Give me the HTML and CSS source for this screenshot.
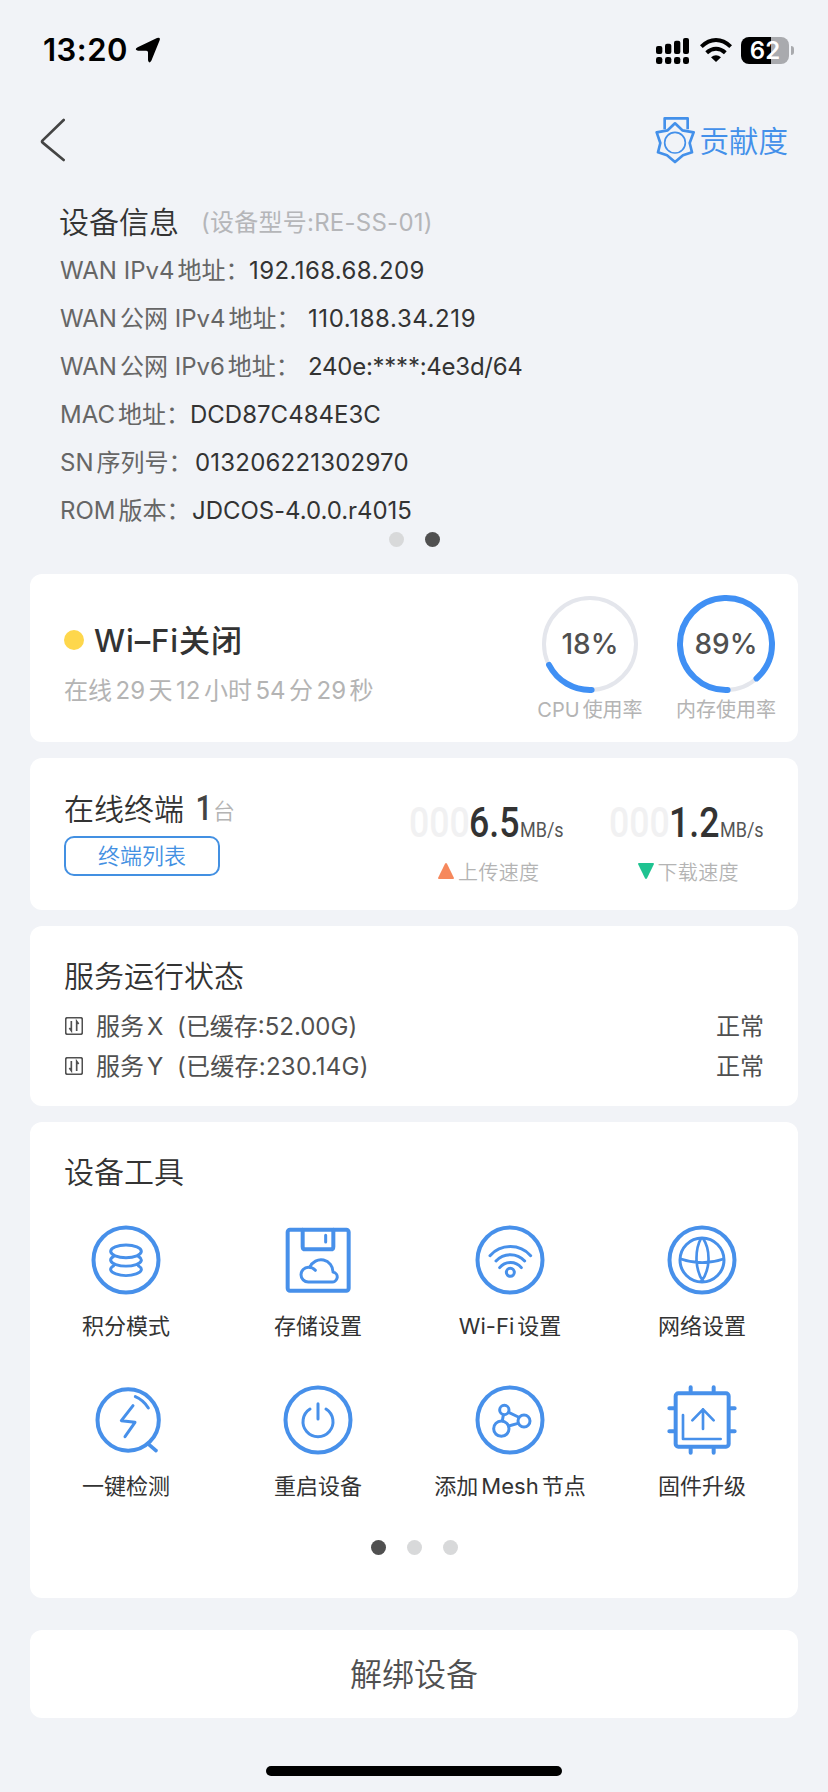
FILE: index.html
```html
<!DOCTYPE html>
<html lang="zh-CN">
<head>
<meta charset="utf-8">
<title>设备信息</title>
<link rel="stylesheet" href="styles.css">
</head>
<body>
<div class="page">
  <header class="status">
    <span class="clock">13:20</span>
    <svg class="locate" width="26" height="26" viewBox="0 0 78 78"><path d="M8 31 66 3Q77 -1 74 10L49 71Q42 82 39 70V46Q39 41 34 41H9Q-4 38 8 31Z"/></svg>
    <svg class="signal" width="33" height="27" viewBox="0 0 99 81">
      <rect x="0" y="27" width="19" height="24" rx="6"/><rect x="27" y="20" width="19" height="31" rx="6"/><rect x="54" y="11" width="19" height="40" rx="6"/><rect x="81" y="3" width="18" height="48" rx="6"/>
      <rect x="0" y="60" width="19" height="21" rx="7"/><rect x="27" y="60" width="19" height="21" rx="7"/><rect x="54" y="60" width="19" height="21" rx="7"/><rect x="81" y="60" width="18" height="21" rx="7"/>
    </svg>
    <svg class="wifi" width="32" height="27" viewBox="0 0 96 81">
      <g fill="none" stroke="#000" stroke-width="12"><path d="M4 29Q24 9 48 9T92 29"/><path d="M20 47Q33 35 48 35T76 47"/></g>
      <path d="M33 61Q48 49 63 61L48 75Z"/>
    </svg>
    <div class="battery"><span>62</span></div>
    <i class="nub"></i>
  </header>

  <nav class="nav">
    <svg class="back" width="26" height="44" viewBox="0 0 78 132"><path d="M74 6 11 67Q7 71 11 74L74 126"/></svg>
    <svg class="medal" width="40" height="48" viewBox="0 0 120 144">
      <path d="M29 40V7H98V40"/>
      <path d="M60 22 82 43 116 49 104 81 111 109 84 118 60 138 36 118 9 109 16 81 5 49 38 43Z"/>
      <circle cx="60" cy="80" r="31" stroke-width="5"/>
    </svg>
    <span class="contrib">贡献度</span>
  </nav>

  <section class="info">
    <div class="info-title"><h1>设备信息</h1><span class="model">(设备型号:RE-SS-01)</span></div>
    <div class="row"><span class="key k1">WAN IPv4<b></b>地址：</span><span class="val v1">192.168.68.209</span></div>
    <div class="row"><span class="key k2">WAN<b></b>公网 IPv4<b></b>地址：</span><span class="val v2">110.188.34.219</span></div>
    <div class="row"><span class="key k2">WAN<b></b>公网 IPv6<b></b>地址：</span><span class="val v3">240e:****:4e3d/64</span></div>
    <div class="row"><span class="key k4">MAC<b></b>地址：</span><span class="val v4">DCD87C484E3C</span></div>
    <div class="row"><span class="key k5">SN<b></b>序列号：</span><span class="val v5">013206221302970</span></div>
    <div class="row"><span class="key k6">ROM<b></b>版本：</span><span class="val v6">JDCOS-4.0.0.r4015</span></div>
    <div class="dots info-dots"><i></i><i class="on"></i></div>
  </section>

  <section class="card wifi-card">
    <div class="wifi-main">
      <div class="wifi-name"><i></i><span>Wi–Fi关闭</span></div>
      <div class="uptime">在线<b></b>29<b></b>天<b></b>12<b></b>小时<b></b>54<b></b>分<b></b>29<b></b>秒</div>
    </div>
    <div class="gauge">
      <div class="ring">
        <svg width="100" height="100" viewBox="0 0 100 100"><circle class="track" cx="50" cy="50" r="46"/><circle class="arc" cx="50" cy="50" r="46" pathLength="100" stroke-dasharray="18 100" transform="rotate(88 50 50)"/></svg>
        <span>18%</span>
      </div>
      <div class="gauge-label">CPU<b></b>使用率</div>
    </div>
    <div class="gauge">
      <div class="ring">
        <svg width="100" height="100" viewBox="0 0 100 100"><circle class="track" cx="50" cy="50" r="46"/><circle class="arc" cx="50" cy="50" r="46" pathLength="100" stroke-dasharray="89 100" transform="rotate(88 50 50)"/></svg>
        <span>89%</span>
      </div>
      <div class="gauge-label">内存使用率</div>
    </div>
  </section>

  <section class="card net-card">
    <div class="clients">
      <div class="clients-line"><h2>在线终端</h2><span class="count">1</span><span class="unit">台</span></div>
      <button class="list-btn">终端列表</button>
    </div>
    <div class="speed">
      <div class="speed-line"><span class="zeros">000</span><span class="num">6.5</span><span class="mbs">MB/s</span></div>
      <div class="speed-label"><svg width="16" height="16" viewBox="0 0 16 16"><path d="M7 .8Q8 -.6 9 .8L16 15Q16 16 15 16H1Q0 16 0 15Z" fill="#f6885c"/></svg>上传速度</div>
    </div>
    <div class="speed">
      <div class="speed-line"><span class="zeros">000</span><span class="num">1.2</span><span class="mbs">MB/s</span></div>
      <div class="speed-label"><svg width="16" height="16" viewBox="0 0 16 16"><path d="M7 15.2Q8 16.6 9 15.2L16 1Q16 0 15 0H1Q0 0 0 1Z" fill="#1fc391"/></svg>下载速度</div>
    </div>
  </section>

  <section class="card service-card">
    <h2>服务运行状态</h2>
    <div class="service"><svg width="18" height="18" viewBox="0 0 54 54"><rect x="2" y="2" width="50" height="50" rx="6"/><path d="M19 12V41L13 33M35 42V13L41 21"/></svg><span class="sname">服务<b></b>X</span><span class="cache c1">(已缓存:52.00G)</span><span class="ok">正常</span></div>
    <div class="service"><svg width="18" height="18" viewBox="0 0 54 54"><rect x="2" y="2" width="50" height="50" rx="6"/><path d="M19 12V41L13 33M35 42V13L41 21"/></svg><span class="sname">服务<b></b>Y</span><span class="cache c2">(已缓存:230.14G)</span><span class="ok">正常</span></div>
  </section>

  <section class="card tools-card">
    <h2>设备工具</h2>
    <div class="tools">
      <div class="tool"><svg viewBox="-108 -108 216 216"><circle class="o" r="97.500"/><ellipse cy="-26" rx="46" ry="19"/><path d="M-38 -10A46 18 0 1 0 38 -10M-38 18A46 18 0 1 0 38 18"/></svg><span>积分模式</span></div>
      <div class="tool"><svg viewBox="-108 -108 216 216"><rect class="o" x="-91" y="-91" width="183" height="183" rx="7"/><path class="o" d="M-46 -91V-40Q-46 -32 -38 -32H38Q46 -32 46 -40V-91"/><path d="M23 -74V-54M-8 31C-14 24 -22 22 -29 22A22 22 0 0 0 -29 66H40A15 15 0 0 0 45 36A36 36 0 0 0 -24 21"/></svg><span>存储设置</span></div>
      <div class="tool"><svg viewBox="-108 -108 216 216"><circle class="o" r="97.500"/><path d="M-60 -13A82 82 0 0 1 62 -13M-42 3A58 58 0 0 1 44 3M-31 23A42 42 0 0 1 34 23"/><circle cx="1" cy="37" r="12"/></svg><span>Wi-Fi<b></b>设置</span></div>
      <div class="tool"><svg viewBox="-108 -108 216 216"><circle class="o" r="97.500"/><circle r="66"/><path class="t" d="M-63 -3Q0 19 64 -3M-3 -65C-22 -30 -22 30 4 65M3 -65C26 -30 26 30 -3 65"/></svg><span>网络设置</span></div>
      <div class="tool"><svg viewBox="-108 -108 216 216"><circle class="o" cx="6.500" r="92"/><path d="M28 -70Q52 -60 67 -36M21 -43L-14 2L27 7L-3 50"/><path class="m" d="M69 74L90 92"/></svg><span>一键检测</span></div>
      <div class="tool"><svg viewBox="-108 -108 216 216"><circle class="o" r="97.500"/><path d="M0 -49V-3M-24 -33A45 45 0 1 0 24 -33"/></svg><span>重启设备</span></div>
      <div class="tool"><svg viewBox="-108 -108 216 216"><circle class="o" r="97.500"/><circle cx="-17" cy="-30" r="14"/><circle cx="42" cy="3" r="18"/><circle cx="-26" cy="26" r="23"/><path d="M-4 -23L25 -9M-4 18L24 10M-20 -15L-23 2"/></svg><span>添加<b></b>Mesh<b></b>节点</span></div>
      <div class="tool"><svg viewBox="-108 -108 216 216"><rect class="o" x="-79" y="-80" width="159" height="160" rx="8"/><path class="o" d="M-34 -98V-86M35 -98V-86M-34 86V98M35 86V98M-98 -35H-85M-98 34H-85M86 -35H98M86 34H98"/><path class="t" d="M3 27V-32M-29 1L3 -32L35 1M-57 -15V57H56"/></svg><span>固件升级</span></div>
    </div>
    <div class="dots tool-dots"><i class="on"></i><i></i><i></i></div>
  </section>

  <button class="card unbind">解绑设备</button>
  <div class="home"></div>
</div>
</body>
</html>
```
FILE: styles.css
```css
* { box-sizing: border-box; }
body { margin: 0; background: #f1f3f7; }
h1, h2 { margin: 0; font-weight: 350; }
b { display: inline-block; width: 3px; }
.page {
  width: 828px; height: 1792px; overflow: hidden;
  display: flex; flex-direction: column;
  background: #f1f3f7; color: #333;
  font-family: Inter, "Noto Sans CJK SC", sans-serif;
  font-weight: 400; white-space: nowrap;
}

.status { height: 100px; display: flex; align-items: center; padding: 0 34px 0 43px; color: #000; }
.clock { font-size: 31px; font-weight: 600; line-height: 40px; letter-spacing: 0.5px; width: 92px; }
.signal { margin-left: auto; }
.wifi { margin-left: 11px; }
.battery {
  margin-left: 9px; width: 48px; height: 27px; border-radius: 8px;
  background: linear-gradient(90deg, #000 62.500%, #a9aaae 62.500%);
  color: #fff; font-size: 24px; font-weight: 600; line-height: 27px; text-align: center;
}
.nub { width: 3px; height: 9px; margin-left: 2px; border-radius: 0 4px 4px 0; background: #a9aaae; }

.nav { height: 92px; display: flex; align-items: flex-start; padding: 16px 40px 0 39px; }
.back { margin-top: 2px; fill: none; stroke: #444; stroke-width: 8; stroke-linecap: round; }
.medal { margin-left: auto; fill: none; stroke: #4390ea; stroke-width: 8; stroke-linejoin: round; }
.contrib { margin-left: 4px; font-size: 29.500px; font-weight: 350; line-height: 50px; color: #4390ea; }

.info { height: 382px; padding: 7px 0 0 59px; }
.info-title { display: flex; align-items: center; height: 46px; margin-bottom: 2px; }
.info-title h1 { font-size: 30px; width: 142px; line-height: 46px; }
.model { font-size: 24px; letter-spacing: 0.25px; color: #b5b6b9; line-height: 46px; padding-top: 2px; }
.row { display: flex; height: 48px; line-height: 48px; font-size: 24px; padding-left: 1px; }
.key { color: #666; }
.k1 { width: 189px; }
.k2 { width: 248px; }
.k4 { width: 130px; }
.k5 { width: 135px; }
.k6 { width: 132px; }
.v1 { letter-spacing: 0.400px; }
.v2 { letter-spacing: 0.600px; }
.v3 { letter-spacing: -0.250px; }
.v5 { letter-spacing: 0.200px; }
.v6 { letter-spacing: -0.050px; }
.dots { display: flex; justify-content: center; gap: 21px; }
.dots i { width: 15px; height: 15px; border-radius: 50%; background: #d8d9da; }
.dots i.on { background: #505050; }
.info-dots { margin: -3px 0 0 -59px; }

.card { margin: 0 30px 16px; border-radius: 12px; background: #fff; flex: none; }

.wifi-card { height: 168px; display: flex; padding: 0 4px 0 34px; }
.wifi-main { flex: 1; padding-top: 42px; }
.wifi-name { display: flex; align-items: center; height: 48px; font-size: 31px; font-weight: 500; letter-spacing: 0.9px; }
.wifi-name i { width: 20px; height: 20px; border-radius: 50%; background: #fed74c; margin-right: 10px; }
.wifi-name span { padding-bottom: 4px; }
.uptime { font-size: 24px; line-height: 48px; margin-top: 3px; color: #b4b4b4; }
.uptime b { width: 3.500px; }
.gauge { width: 136px; padding-top: 20px; text-align: center; }
.ring { display: grid; place-items: center; }
.ring > * { grid-area: 1 / 1; }
.ring span { font-size: 28px; font-weight: 500; color: #505050; }
.track, .arc { fill: none; stroke: #e4e6ec; stroke-width: 4; }
.arc { stroke: #4090f4; stroke-width: 6; stroke-linecap: round; }
.gauge-label { font-size: 20px; line-height: 33px; color: #b4b4b4; }

.net-card { height: 152px; display: flex; padding-left: 30px; }
.clients { width: 340px; padding: 28px 0 0 4px; }
.clients-line { display: flex; height: 46px; line-height: 46px; }
.clients-line h2 { font-size: 30px; width: 130px; line-height: 46px; }
.count { width: 19px; font: 500 35px/46px Roboto, sans-serif; color: #444; transform: scaleX(0.85); }
.unit { font-size: 22px; font-weight: 350; color: #b4b4b4; line-height: 50px; }
.list-btn {
  display: block; width: 156px; height: 40px; margin-top: 4px; padding: 0;
  border: 2px solid #4390e2; border-radius: 10px; background: #fff;
  color: #4390e2; font: 350 22px/36px Inter, "Noto Sans CJK SC", sans-serif;
}
.speed { width: 200px; padding-top: 38px; }
.speed-line { display: flex; height: 54px; padding-left: 10px; font: 500 42px/54px Roboto, sans-serif; }
.speed-line span { transform-origin: 0 50%; }
.zeros { width: 60px; color: #f1f1f2; transform: scaleX(0.85); }
.num { width: 51px; transform: scaleX(0.85); }
.mbs { font-size: 20px; font-weight: 400; line-height: 69px; color: #555; transform: scaleX(0.9); }
.speed-label {
  display: flex; align-items: center; gap: 4px; height: 42px; padding-left: 39px;
  font-size: 20px; font-weight: 350; letter-spacing: 0.3px; color: #b4b4b4;
}

.service-card { height: 180px; padding: 27px 34px 0; }
.service-card h2, .tools-card h2 { font-size: 30px; line-height: 46px; }
.service { display: flex; align-items: center; height: 40px; font-size: 24px; color: #505050; }
.service-card h2 + .service { margin-top: 7px; }
.service svg { margin: 0 13px 0 1px; fill: none; stroke: #505050; stroke-width: 5; }
.service span { padding-bottom: 3px; }
.sname { width: 81px; }
.c2 { letter-spacing: 0.25px; }
.ok { margin-left: auto; }

.tools-card { height: 476px; padding-top: 27px; margin-bottom: 32px; }
.tools-card h2 { padding-left: 34px; }
.tools { display: grid; grid-template-columns: repeat(4, 192px); grid-auto-rows: 160px; padding-top: 29px; }
.tool { display: flex; flex-direction: column; align-items: center; }
.tool svg {
  width: 72px; height: 72px; fill: none; stroke: #4790ea; stroke-width: 9;
  stroke-linecap: round; stroke-linejoin: round;
}
.tool .o { stroke-width: 12; }
.tool .m { stroke-width: 11; }
.tool .t { stroke-width: 8; }
.tool span { margin-top: 10px; font-size: 22px; line-height: 40px; }
.tool-dots { margin-top: -4px; }

.unbind {
  height: 88px; border: 0; padding: 0; margin-bottom: 0; color: #505050;
  font: 350 32px/89px Inter, "Noto Sans CJK SC", sans-serif;
}
.home { width: 296px; height: 10px; margin: 48px 0 0 266px; border-radius: 5px; background: #000; }
```
